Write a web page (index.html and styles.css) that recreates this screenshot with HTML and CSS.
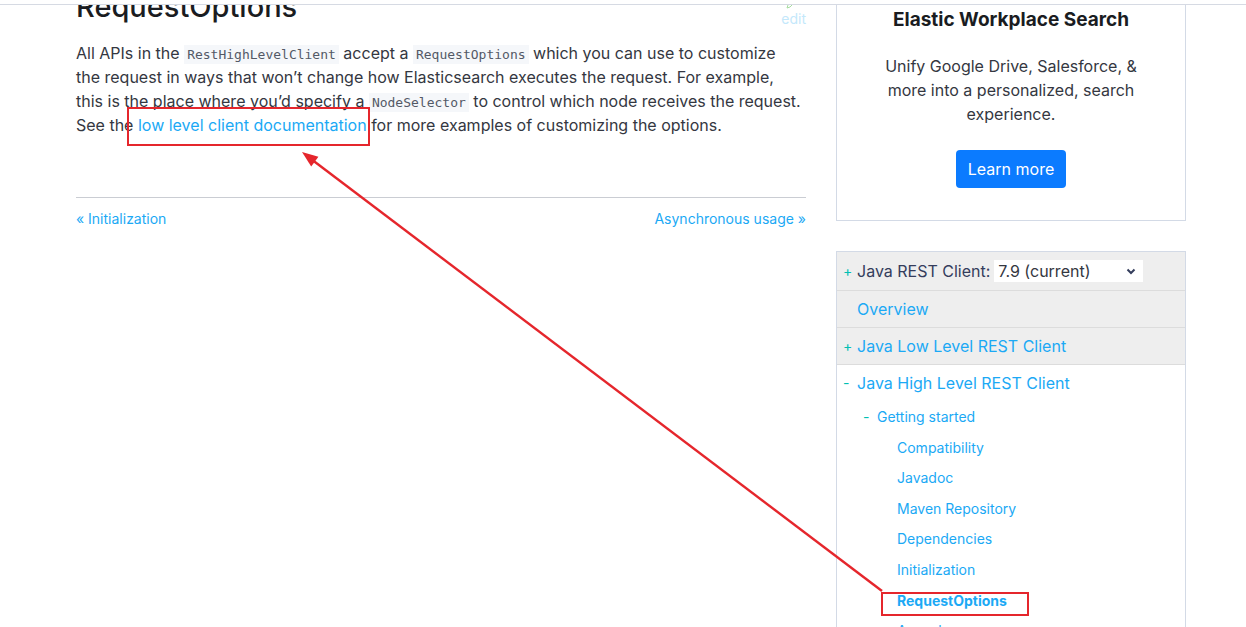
FILE: index.html
```html
<!DOCTYPE html>
<html lang="en">
<head>
<meta charset="utf-8">
<title>RequestOptions | Java REST Client</title>
<link rel="stylesheet" href="styles.css">
</head>
<body>
<div class="topbar"></div>
<div class="page">
  <main class="main">
    <div class="title-row">
      <h1>RequestOptions</h1>
      <a class="edit" href="#">
        <svg class="edit-icon" width="10" height="10" viewBox="0 0 10 10"><path d="M1 9 L2 6 L7 1 L9 3 L4 8 Z" fill="none" stroke="#a6dca0" stroke-width="1"/></svg>
        <span>edit</span>
      </a>
    </div>
    <p class="lead">All APIs in the <code>RestHighLevelClient</code> accept a <code>RequestOptions</code> which you can use to customize the request in ways that won’t change how Elasticsearch executes the request. For example, this is the place where you’d specify a <code>NodeSelector</code> to control which node receives the request. See the <a href="#">low level client documentation</a> for more examples of customizing the options.</p>
    <div class="divider"></div>
    <nav class="pager">
      <a href="#">« Initialization</a>
      <a href="#">Asynchronous usage »</a>
    </nav>
  </main>
  <aside class="sidebar">
    <div class="promo">
      <h3>Elastic Workplace Search</h3>
      <p>Unify Google Drive, Salesforce, &amp; more into a personalized, search experience.</p>
      <a class="btn" href="#">Learn more</a>
    </div>
    <div class="toc">
      <div class="toc-row first">
        <span class="mark">+</span>
        <span class="label">Java REST Client:</span>
        <span class="select-wrap">
          <select class="version"><option>7.9 (current)</option></select>
          <svg width="10" height="7" viewBox="0 0 10 7"><path d="M1.5 1.5 L5 5 L8.5 1.5" fill="none" stroke="#343d5c" stroke-width="2"/></svg>
        </span>
      </div>
      <div class="toc-row"><span class="mark"></span><a href="#">Overview</a></div>
      <div class="toc-row"><span class="mark">+</span><a href="#">Java Low Level REST Client</a></div>
      <div class="toc-row open"><span class="mark">-</span><a href="#">Java High Level REST Client</a></div>
      <ul class="sub">
        <li><span class="dash">-</span><a href="#">Getting started</a>
          <ul class="subsub">
            <li><a href="#">Compatibility</a></li>
            <li><a href="#">Javadoc</a></li>
            <li><a href="#">Maven Repository</a></li>
            <li><a href="#">Dependencies</a></li>
            <li><a href="#">Initialization</a></li>
            <li><a class="current" href="#">RequestOptions</a></li>
            <li><a href="#">Asynchronous usage</a></li>
            <li><a href="#">Synchronous usage</a></li>
          </ul>
        </li>
      </ul>
    </div>
  </aside>
</div>
<svg class="annot" width="1246" height="627" viewBox="0 0 1246 627">
  <rect x="128" y="108" width="241" height="37" fill="none" stroke="#e5262c" stroke-width="2"/>
  <rect x="882" y="593" width="146" height="22" fill="none" stroke="#e5262c" stroke-width="2"/>
  <line x1="882" y1="591" x2="313" y2="160.5" stroke="#e5262c" stroke-width="2.4"/>
  <polygon points="302,152 318.4,156.8 311.2,166.4" fill="#e5262c"/>
</svg>
</body>
</html>
```
FILE: styles.css
```css
* { box-sizing: border-box; }

html, body {
  margin: 0;
  background: #ffffff;
}

body {
  font-family: "Inter", "Noto Sans", sans-serif;
  color: #343741;
  overflow: hidden;
}

a {
  color: #1ba9f5;
  text-decoration: none;
}

.topbar {
  position: fixed;
  top: 0;
  left: 0;
  right: 0;
  height: 5px;
  background: #ffffff;
  border-bottom: 1px solid #d6dae3;
  z-index: 10;
}

.page {
  display: flex;
  align-items: flex-start;
  gap: 30px;
  padding-left: 76px;
  margin-top: -11px;
}

.main {
  width: 730px;
  flex: none;
}

.title-row {
  display: flex;
  justify-content: space-between;
  align-items: flex-start;
  height: 36px;
}

h1 {
  margin: 0;
  font-size: 29px;
  line-height: 36px;
  font-weight: 500;
  color: #1a1c21;
}

.edit {
  display: flex;
  flex-direction: column;
  align-items: flex-start;
  padding-top: 10px;
  font-size: 14px;
  line-height: 20px;
  color: #c4e8fb;
}

.edit-icon {
  margin-left: 5px;
}

.lead {
  margin: 16px 0 0;
  padding-right: 4px;
  font-size: 16px;
  line-height: 24px;
}

code {
  font-family: "DejaVu Sans Mono", "Liberation Mono", monospace;
  font-size: 13px;
  line-height: 1;
  background: #f5f7fa;
  color: #535966;
  padding: 2px 3px;
}

.divider {
  margin-top: 60px;
  border-top: 1px solid #cacdd3;
}

.pager {
  display: flex;
  justify-content: space-between;
  margin-top: 11px;
  font-size: 14px;
  line-height: 20px;
}

.sidebar {
  width: 350px;
  flex: none;
}

.promo {
  display: flex;
  flex-direction: column;
  align-items: center;
  border: 1px solid #d3dae6;
  padding: 18px 0 32px;
  text-align: center;
}

.promo h3 {
  margin: 0;
  font-size: 19px;
  line-height: 24px;
  font-weight: 700;
  color: #1a1c21;
}

.promo p {
  margin: 22px 0 0;
  padding: 0 44px;
  font-size: 16px;
  line-height: 24px;
}

.btn {
  margin-top: 24px;
  background: #0b7bff;
  color: #ffffff;
  font-size: 16px;
  line-height: 24px;
  padding: 7px 12px;
  border-radius: 4px;
}

.toc {
  margin-top: 30px;
  border: 1px solid #d3dae6;
  border-bottom: none;
  padding-bottom: 40px;
}

.toc-row {
  display: flex;
  align-items: center;
  background: #eeeeee;
  border-bottom: 1px solid #dcdcdc;
  padding: 6px 0;
  font-size: 16px;
  line-height: 24px;
}

.toc-row.first {
  padding: 7px 0;
}

.toc-row.open {
  background: #ffffff;
  border-bottom: none;
}

.mark {
  width: 14px;
  margin-left: 6px;
  flex: none;
  font-size: 14px;
  color: #00bfb3;
}

.label {
  color: #343d5c;
}

.select-wrap {
  display: inline-flex;
  align-items: center;
  margin-left: 4px;
  width: 149px;
  height: 22px;
  background: #ffffff;
  padding-right: 7px;
}

.version {
  appearance: none;
  -webkit-appearance: none;
  border: none;
  background: transparent;
  font-family: inherit;
  font-size: 16px;
  color: #343741;
  padding: 0 0 0 4px;
  flex: 1;
  outline: none;
}

.sub, .subsub {
  list-style: none;
  margin: 0;
  padding: 0;
}

.sub {
  padding-left: 26px;
  padding-top: 1px;
}

.sub li {
  font-size: 14px;
  line-height: 30.6px;
}

.dash {
  display: inline-block;
  width: 14px;
  color: #00bfb3;
}

.subsub {
  padding-left: 34px;
}

.current {
  font-weight: 700;
}

.annot {
  position: absolute;
  top: 0;
  left: 0;
  z-index: 20;
  pointer-events: none;
}
```
